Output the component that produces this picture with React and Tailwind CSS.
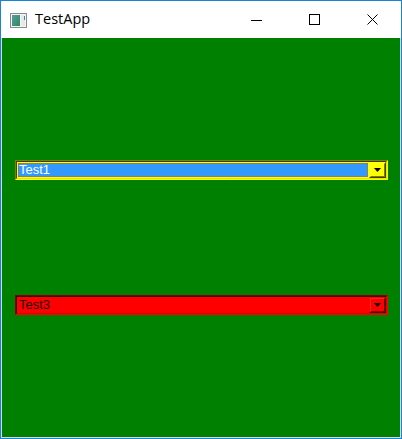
import React from "react";

function Combo({ text, variant }) {
  const yellow = variant === "yellow";
  return (
    <div
      className={
        yellow
          ? "ml-[13px] w-[373px] h-[20px] border border-t-[#808000] border-l-[#808000] border-b-[#ffff00] border-r-[#ffff00]"
          : "ml-[13px] w-[373px] h-[20px] border border-t-[#800000] border-l-[#800000] border-b-[#ff0000] border-r-[#ff0000]"
      }
    >
      <div
        className={
          yellow
            ? "h-full w-full border border-t-[#404000] border-l-[#404000] border-b-[#e6e600] border-r-[#e6e600] bg-[#ffff00] flex"
            : "h-full w-full border border-t-[#400000] border-l-[#400000] border-b-[#e00000] border-r-[#e00000] bg-[#ff0000] flex"
        }
      >
        <div className="flex-1 py-px pl-px pr-px">
          {yellow ? (
            <div className="h-[14px] bg-[#3399ff] border border-dotted border-[#cc6600] flex items-center">
              <span className="text-[13px] leading-[14px] text-white whitespace-nowrap" style={{ fontFamily: '"Liberation Sans", Arial, sans-serif' }}>
                {text}
              </span>
            </div>
          ) : (
            <div className="h-[14px] flex items-center">
              <span className="pl-px text-[13px] leading-[14px] text-[#200000] whitespace-nowrap" style={{ fontFamily: '"Liberation Sans", Arial, sans-serif' }}>
                {text}
              </span>
            </div>
          )}
        </div>
        <div
          className={
            yellow
              ? "w-[17px] h-full border border-t-[#ffff00] border-l-[#ffff00] border-b-[#404000] border-r-[#404000]"
              : "w-[17px] h-full border border-t-[#ff0000] border-l-[#ff0000] border-b-[#400000] border-r-[#400000]"
          }
        >
          <div
            className={
              yellow
                ? "h-full w-full border border-t-[#ffff40] border-l-[#ffff40] border-b-[#808000] border-r-[#808000] flex items-center justify-center"
                : "h-full w-full border border-t-[#ff2020] border-l-[#ff2020] border-b-[#800000] border-r-[#800000] flex items-center justify-center"
            }
          >
            <svg width="7" height="4" viewBox="0 0 7 4" className="block">
              <path d="M0 0H7L3.5 4Z" fill="#000" />
            </svg>
          </div>
        </div>
      </div>
    </div>
  );
}

export default function App() {
  return (
    <div className="w-[402px] h-[439px] bg-[#1883d7] p-px flex flex-col">
      <div className="h-[37px] bg-white flex items-stretch">
        <div className="flex-1 flex items-center">
          <svg width="17" height="15" viewBox="0 0 17 15" className="ml-[9px] mt-[1px]">
            <defs>
              <linearGradient id="g" x1="0" y1="0" x2="1" y2="1">
                <stop offset="0" stopColor="#5a9aa8" />
                <stop offset="1" stopColor="#2d8a5a" />
              </linearGradient>
            </defs>
            <rect x="0.5" y="0.5" width="16" height="14" fill="#f4f4f4" stroke="#8a8a8a" />
            <rect x="2" y="2" width="8" height="11" fill="url(#g)" />
            <rect x="11" y="2" width="4" height="11" fill="#e8e8e8" />
            <rect x="14" y="3" width="1" height="4" fill="#3a86b8" />
          </svg>
          <span
            className="ml-[8px] text-[14.5px] leading-none text-black"
            style={{ fontFamily: '"Open Sans", "Noto Sans", sans-serif' }}
          >
            TestApp
          </span>
        </div>
        <div className="w-[58px] flex items-center justify-center">
          <div className="w-[11px] h-px bg-black mt-px" />
        </div>
        <div className="w-[58px] flex items-center justify-center">
          <div className="w-[11px] h-[11px] border border-black" />
        </div>
        <div className="w-[58px] flex items-center justify-center">
          <svg width="11" height="11" viewBox="0 0 11 11">
            <path d="M0.5 0.5L10.5 10.5M10.5 0.5L0.5 10.5" stroke="#000" strokeWidth="1" />
          </svg>
        </div>
      </div>
      <div className="flex-1 bg-[#008000] border-l border-r border-b border-[#d8d8d8] flex flex-col">
        <div className="mt-[122px]">
          <Combo text="Test1" variant="yellow" />
        </div>
        <div className="mt-[115px]">
          <Combo text="Test3" variant="red" />
        </div>
      </div>
    </div>
  );
}
